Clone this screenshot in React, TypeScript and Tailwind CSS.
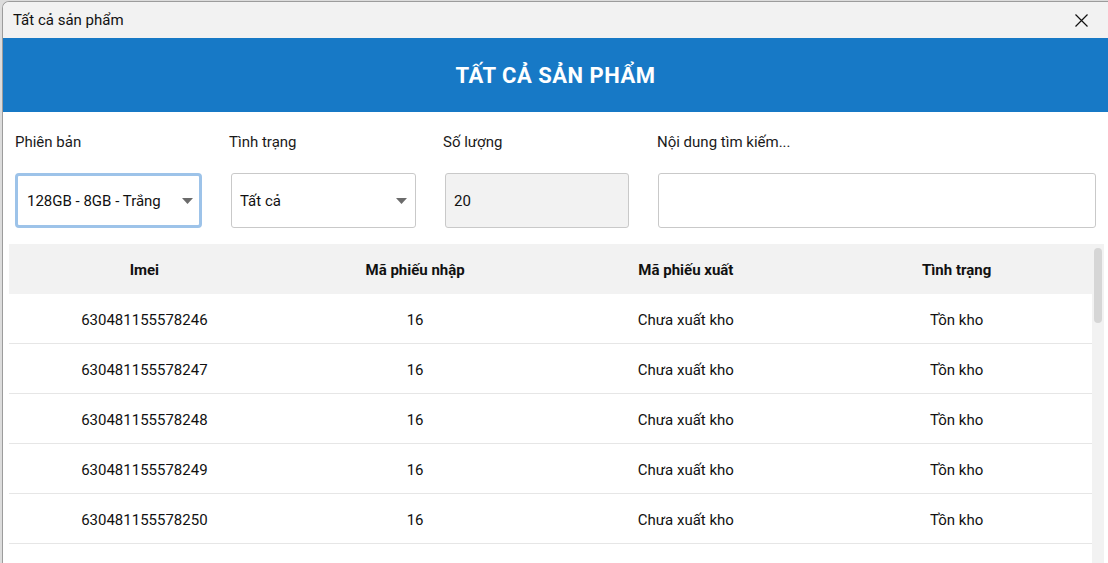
import type { JSX } from "react";

const rows = [
    { imei: "630481155578246", nhap: "16", xuat: "Chưa xuất kho", tinhTrang: "Tồn kho" },
    { imei: "630481155578247", nhap: "16", xuat: "Chưa xuất kho", tinhTrang: "Tồn kho" },
    { imei: "630481155578248", nhap: "16", xuat: "Chưa xuất kho", tinhTrang: "Tồn kho" },
    { imei: "630481155578249", nhap: "16", xuat: "Chưa xuất kho", tinhTrang: "Tồn kho" },
    { imei: "630481155578250", nhap: "16", xuat: "Chưa xuất kho", tinhTrang: "Tồn kho" },
];

function Caret(): JSX.Element {
    return (
        <svg width="11" height="6" viewBox="0 0 11 6" className="shrink-0">
            <path d="M0 0 L11 0 L5.5 6 Z" fill="#6b6b6b" />
        </svg>
    );
}

function Field({ label, children, wide }: { label: string; children: JSX.Element; wide?: boolean }): JSX.Element {
    return (
        <div className={wide ? "flex-1" : "w-[214px] shrink-0"}>
            <div className="h-[20px] text-[15px] leading-[20px] text-[#1a1a1a]">{label}</div>
            <div className="mt-[21px]">{children}</div>
        </div>
    );
}

export default function App(): JSX.Element {
    return (
        <div
            className="h-[563px] w-[1108px] overflow-hidden bg-[#dcdcdc] pl-[2px] pt-[1px]"
            style={{ fontFamily: "Roboto, 'Noto Sans', sans-serif" }}
        >
            <div className="flex h-full flex-col overflow-hidden rounded-tl-[7px] border-l border-t border-[#9c9c9c] bg-white">
                {/* title bar */}
                <div className="flex h-[36px] shrink-0 items-center justify-between bg-[#f2f2f2] pl-[10px] pr-[20px]">
                    <span className="text-[15px] text-[#111]">Tất cả sản phẩm</span>
                    <svg width="13" height="13" viewBox="0 0 13 13">
                        <path d="M0.5 0.5 L12.5 12.5 M12.5 0.5 L0.5 12.5" stroke="#111" strokeWidth="1.2" />
                    </svg>
                </div>

                {/* header */}
                <div className="flex h-[74px] shrink-0 items-center justify-center bg-[#1779c6]">
                    <span className="text-[22px] font-bold tracking-[0.5px] text-white">TẤT CẢ SẢN PHẨM</span>
                </div>

                {/* filters */}
                <div className="flex shrink-0 pl-[12px] pr-[12px] pt-[20px]">
                    <Field label="Phiên bản">
                        <div className="flex h-[55px] w-[187px] items-center justify-between rounded-[4px] border-[3px] border-[#9dc3e9] pl-[9px] pr-[6px] pt-[1px]">
                            <span className="text-[15px] text-[#111]">128GB - 8GB - Trắng</span>
                            <Caret />
                        </div>
                    </Field>
                    <Field label="Tình trạng">
                        <div className="ml-[2px] flex h-[55px] w-[185px] items-center justify-between rounded-[3px] border border-[#c9c9c9] pl-[8px] pr-[8px] pt-[1px]">
                            <span className="text-[15px] text-[#111]">Tất cả</span>
                            <Caret />
                        </div>
                    </Field>
                    <Field label="Số lượng">
                        <div className="ml-[2px] flex h-[55px] w-[184px] items-center rounded-[3px] border border-[#c9c9c9] bg-[#f2f2f2] pl-[8px] pt-[1px]">
                            <span className="text-[15px] text-[#111]">20</span>
                        </div>
                    </Field>
                    <Field label="Nội dung tìm kiếm..." wide>
                        <div className="ml-[1px] h-[55px] rounded-[3px] border border-[#c9c9c9] bg-white" />
                    </Field>
                </div>

                {/* table */}
                <div className="mt-[16px] flex min-h-0 flex-1 pl-[6px] pr-[4px]">
                    <div className="flex-1">
                        <div className="grid h-[50px] grid-cols-4 items-center bg-[#f2f2f2] pt-[3px] text-center text-[15px] font-bold text-[#111]">
                            <div>Imei</div>
                            <div>Mã phiếu nhập</div>
                            <div>Mã phiếu xuất</div>
                            <div>Tình trạng</div>
                        </div>
                        {rows.map((r) => (
                            <div
                                key={r.imei}
                                className="grid h-[50px] grid-cols-4 items-center border-b border-[#e6e6e6] pt-[3px] text-center text-[15px] text-[#111]"
                            >
                                <div>{r.imei}</div>
                                <div>{r.nhap}</div>
                                <div>{r.xuat}</div>
                                <div>{r.tinhTrang}</div>
                            </div>
                        ))}
                    </div>
                    <div className="w-[12px] shrink-0 bg-[#f2f2f2] pt-[4px]">
                        <div className="mx-auto h-[75px] w-[8px] rounded-full bg-[#d6d6d6]" />
                    </div>
                </div>
            </div>
        </div>
    );
}
